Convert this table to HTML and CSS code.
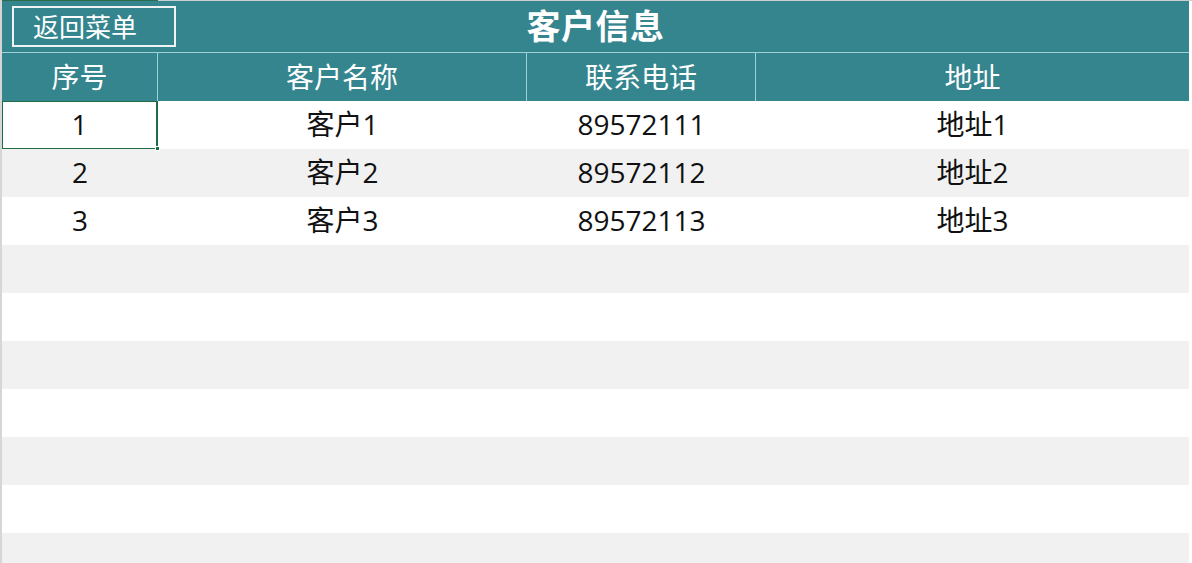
FILE: index.html
```html
<!DOCTYPE html>
<html lang="zh-CN">
<head>
<meta charset="utf-8">
<title>客户信息</title>
<link rel="stylesheet" href="styles.css">
</head>
<body>
<div class="topstrip"><span class="topsel"></span></div>
<div class="sheet">
  <div class="titlebar">
    <button class="back">返回菜单</button>
    <h1 class="title">客户信息</h1>
  </div>
  <div class="grid head">
    <div class="cell">序号</div>
    <div class="cell">客户名称</div>
    <div class="cell">联系电话</div>
    <div class="cell last">地址</div>
  </div>
  <div class="grid row">
    <div class="cell selected">1<span class="handle"></span></div>
    <div class="cell">客户1</div>
    <div class="cell">89572111</div>
    <div class="cell">地址1</div>
  </div>
  <div class="grid row alt">
    <div class="cell">2</div>
    <div class="cell">客户2</div>
    <div class="cell">89572112</div>
    <div class="cell">地址2</div>
  </div>
  <div class="grid row">
    <div class="cell">3</div>
    <div class="cell">客户3</div>
    <div class="cell">89572113</div>
    <div class="cell">地址3</div>
  </div>
  <div class="grid row alt"></div>
  <div class="grid row"></div>
  <div class="grid row alt"></div>
  <div class="grid row"></div>
  <div class="grid row alt"></div>
  <div class="grid row"></div>
  <div class="grid row alt"></div>
</div>
</body>
</html>
```
FILE: styles.css
```css
* { box-sizing: border-box; margin: 0; padding: 0; }
html, body { width: 1192px; height: 563px; overflow: hidden; background: #ffffff; }
body {
  font-family: "Noto Sans CJK SC", "Noto Sans", sans-serif;
  border-left: 2px solid #d6d6d6;
}
.topstrip {
  height: 1px;
  background: #c9cfd0;
  display: flex;
}
.topsel { width: 156px; background: #2a6b4c; }
.sheet { width: 1187px; }
.titlebar {
  position: relative;
  background: #35858f;
  border-bottom: 1px solid #9fd0d6;
  display: flex;
  align-items: center;
  justify-content: center;
  height: 52px;
}
.title {
  color: #ffffff;
  font-size: 34px;
  font-weight: 700;
  line-height: 1;
  letter-spacing: 0.5px;
  margin-top: -3px;
}
.back {
  position: absolute;
  left: 10px;
  top: 5px;
  width: 164px;
  height: 41px;
  background: transparent;
  border: 2px solid #eef4f4;
  color: #ffffff;
  font-family: inherit;
  font-size: 26px;
  line-height: 1;
  text-align: left;
  padding-left: 19px;
  padding-bottom: 2px;
}
.grid {
  display: grid;
  grid-template-columns: 156px 369px 229px 433px;
  height: 48px;
}
.head { background: #35858f; color: #ffffff; height: 48px; }
.head .cell { border-right: 1px solid #9fd0d6; }
.head .cell.last { border-right: none; }
.cell {
  position: relative;
  display: flex;
  align-items: center;
  justify-content: center;
  font-size: 28px;
  line-height: 1;
  padding-bottom: 2px;
}
.row { color: #111111; background: #ffffff; height: 48px; }
.row .cell { font-family: "Open Sans", "Noto Sans CJK SC", sans-serif; padding-bottom: 3px; }
.row.alt { background: #f1f1f1; }
.selected {
  border: 1px solid #1f6d44;
  border-right-width: 2px;
  background: #ffffff;
}
.handle {
  position: absolute;
  right: -4px;
  bottom: -3px;
  width: 5px;
  height: 5px;
  background: #1f6d44;
  border: 1px solid #ffffff;
}
```
